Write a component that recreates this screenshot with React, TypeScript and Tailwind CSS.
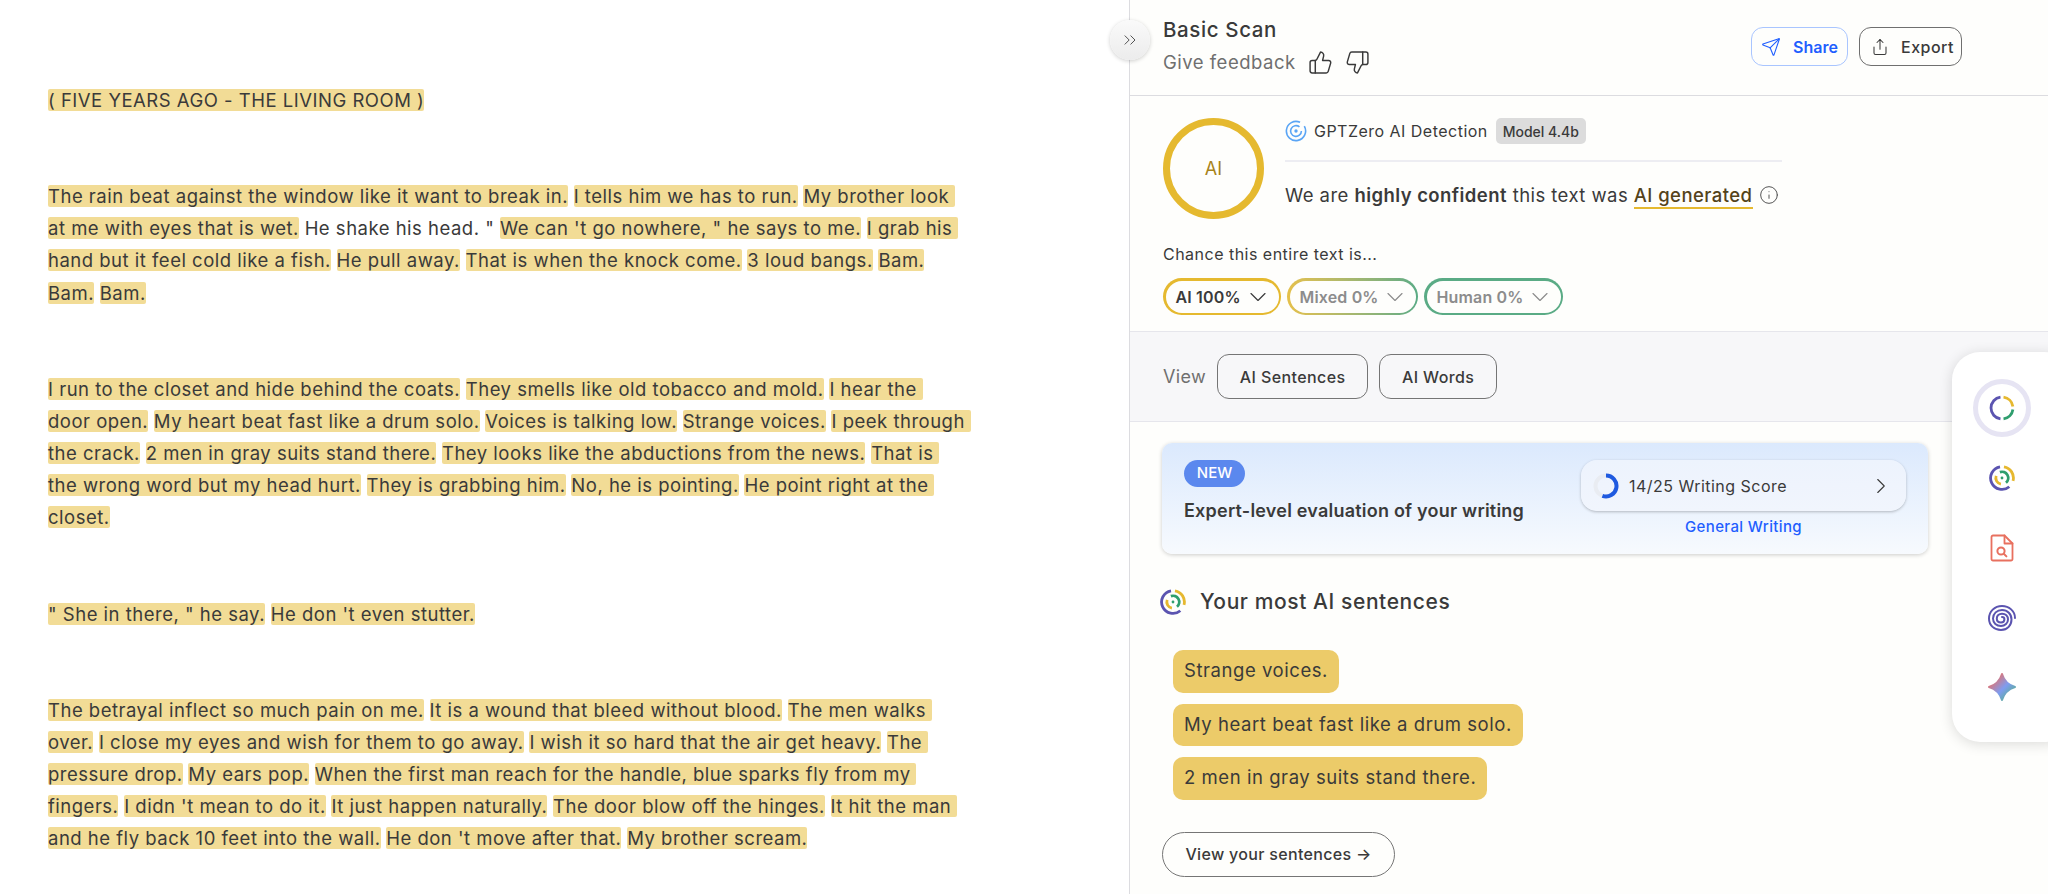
import { ChevronDown, ChevronRight, ChevronsRight, Info, Send, Share, ThumbsDown, ThumbsUp } from 'lucide-react';

type Part = { text: string; ai?: boolean };

const ai = (text: string): Part => ({ text, ai: true });

// line ends are kept as in the scan, the highlight runs over the trailing space
const paragraphs: Part[][] = [
  [ai('( FIVE YEARS AGO - THE LIVING ROOM )')],
  [
    ai('The rain beat against the window like it want to break in.'),
    ai('I tells him we has to run.'),
    ai('My brother look \nat me with eyes that is wet.'),
    { text: 'He shake his head. "' },
    ai("We can 't go nowhere, \" he says to me."),
    ai('I grab his \nhand but it feel cold like a fish.'),
    ai('He pull away.'),
    ai('That is when the knock come.'),
    ai('3 loud bangs.'),
    ai('Bam.\n'),
    ai('Bam.'),
    ai('Bam.'),
  ],
  [
    ai('I run to the closet and hide behind the coats.'),
    ai('They smells like old tobacco and mold.'),
    ai('I hear the \ndoor open.'),
    ai('My heart beat fast like a drum solo.'),
    ai('Voices is talking low.'),
    ai('Strange voices.'),
    ai('I peek through \nthe crack.'),
    ai('2 men in gray suits stand there.'),
    ai('They looks like the abductions from the news.'),
    ai('That is \nthe wrong word but my head hurt.'),
    ai('They is grabbing him.'),
    ai('No, he is pointing.'),
    ai('He point right at the \ncloset.'),
  ],
  [ai('" She in there, " he say.'), ai("He don 't even stutter.")],
  [
    ai('The betrayal inflect so much pain on me.'),
    ai('It is a wound that bleed without blood.'),
    ai('The men walks \nover.'),
    ai('I close my eyes and wish for them to go away.'),
    ai('I wish it so hard that the air get heavy.'),
    ai('The \npressure drop.'),
    ai('My ears pop.'),
    ai('When the first man reach for the handle, blue sparks fly from my \nfingers.'),
    ai("I didn 't mean to do it."),
    ai('It just happen naturally.'),
    ai('The door blow off the hinges.'),
    ai('It hit the man \nand he fly back 10 feet into the wall.'),
    ai("He don 't move after that."),
    ai('My brother scream.'),
  ],
];

// arc between two clock angles (degrees) for the ring logos
function arc(cx: number, cy: number, r: number, from: number, to: number) {
  const pt = (a: number) => {
    const rad = ((a - 90) * Math.PI) / 180;
    return `${(cx + r * Math.cos(rad)).toFixed(2)} ${(cy + r * Math.sin(rad)).toFixed(2)}`;
  };
  return `M${pt(from)} A${r} ${r} 0 ${to - from > 180 ? 1 : 0} 1 ${pt(to)}`;
}

function DetectorLogo({ size }: { size: number }) {
  return (
    <svg width={size} height={size} viewBox="0 0 26 26" fill="none" strokeWidth="2.8">
      <path d={arc(13, 13, 11.4, 140, 350)} stroke="#5b54b0" />
      <path d={arc(13, 13, 11.4, 10, 105)} stroke="#e6b82f" />
      <path d={arc(13, 13, 6.2, 340, 500)} stroke="#2f9e6e" />
      <path d={arc(13, 13, 6.2, 190, 290)} stroke="#e6b82f" />
      <circle cx="13" cy="13" r="1.4" fill="#2f9e6e" />
    </svg>
  );
}

function ChartRing() {
  return (
    <svg width="26" height="26" viewBox="0 0 26 26" fill="none" strokeWidth="2.8">
      <path d={arc(13, 13, 11, 188, 352)} stroke="#5b54b0" />
      <path d={arc(13, 13, 11, 8, 82)} stroke="#e6b82f" />
      <path d={arc(13, 13, 11, 98, 172)} stroke="#2f9e6e" />
    </svg>
  );
}

function FileSearchIcon() {
  return (
    <svg width="24" height="28" viewBox="0 0 24 28" fill="none" stroke="#e8705f" strokeWidth="1.8" strokeLinejoin="round" strokeLinecap="round">
      <path d="M3 1.5h11.5l8 8v15.5a1.5 1.5 0 0 1-1.5 1.5H3a1.5 1.5 0 0 1-1.5-1.5V3A1.5 1.5 0 0 1 3 1.5z" />
      <path d="M14.5 1.5v8h8" />
      <circle cx="11" cy="17" r="3.6" strokeWidth="2" />
      <path d="M13.8 19.8l2.6 2.6" strokeWidth="2" />
    </svg>
  );
}

function SpiralIcon() {
  return (
    <svg width="28" height="26" viewBox="0 0 28 26" fill="none" stroke="#5b54b0" strokeWidth="2" strokeLinecap="round">
      <path d="M27 13C27 6 21 1 14 1C6.5 1 1 6.5 1 13.5C1 20.5 6.5 25 13 25C19.5 25 23.5 20 23.5 14.5C23.5 9 19.5 5 14 5C9 5 5 8.5 5 13.5C5 18 8.5 21 13 21C17 21 20 18 20 14.5C20 11 17.5 8.7 14 8.7C11 8.7 8.8 10.8 8.8 13.5C8.8 16 10.7 17.5 13 17.5C15 17.5 16.4 16 16.4 14.3C16.4 12.8 15.3 12 14 12" />
    </svg>
  );
}

function SparkIcon() {
  return (
    <svg width="30" height="30" viewBox="0 0 30 30">
      <defs>
        <linearGradient id="spark" x1="0" y1="0" x2="1" y2="1">
          <stop offset="0.15" stopColor="#ea6f66" />
          <stop offset="0.55" stopColor="#7f9cf0" />
          <stop offset="0.9" stopColor="#55b08a" />
        </linearGradient>
      </defs>
      <path d="M15 2Q18 12 28 15Q18 18 15 28Q12 18 2 15Q12 12 15 2Z" fill="url(#spark)" stroke="url(#spark)" strokeWidth="2" strokeLinejoin="round" />
    </svg>
  );
}

function GptZeroMark() {
  return (
    <svg width="22" height="22" viewBox="0 0 22 22" fill="none" stroke="#5aa5f5" strokeWidth="1.6">
      <path d={arc(11, 11, 9.6, 60, 385)} />
      <path d={arc(11, 11, 5.4, 90, 400)} />
      <circle cx="11" cy="11" r="1.7" fill="#5aa5f5" stroke="none" />
    </svg>
  );
}

function Pill({ label, className }: { label: string; className: string }) {
  return (
    <div className={`h-[37px] rounded-full p-[2.5px] ${className}`}>
      <div className="flex h-full items-center justify-between rounded-full bg-[#fefefc] pl-[10px] pr-[7px] text-[16px] font-semibold tracking-[0.01em]">
        <span>{label}</span>
        <ChevronDown size={28} strokeWidth={1} />
      </div>
    </div>
  );
}

export default function App() {
  return (
    <div className="flex h-screen overflow-hidden bg-white font-['Inter',sans-serif] text-[#3a3a3a]">
      {/* Scanned document */}
      <div className="w-[1129px] shrink-0 pl-[48px] pr-[100px] pt-[84px] text-[18.5px] leading-[32.1px] tracking-[0.027em]">
        {paragraphs.map((parts, i) => (
          <p key={i} className="mb-[64.2px] whitespace-pre-wrap">
            {parts.map((part, j) => (
              <span key={j}>
                <span className={part.ai ? 'rounded-[2px] bg-[#f2dc96] [box-decoration-break:clone]' : ''}>{part.text}</span>
                {j < parts.length - 1 && !part.text.endsWith('\n') ? ' ' : ''}
              </span>
            ))}
          </p>
        ))}
      </div>

      {/* Results panel */}
      <div className="relative flex-1 border-l border-[#dcdce0] bg-[#fefefc]">
        <button className="absolute left-[-20px] top-[20px] flex h-[40px] w-[40px] items-center justify-center rounded-full bg-gradient-to-b from-[#fafafa] to-[#ececec] text-[#444] shadow-[0_1px_4px_rgba(0,0,0,0.2)]">
          <ChevronsRight size={20} strokeWidth={1.1} />
        </button>

        <div className="flex h-[96px] items-start justify-between border-b border-[#dcdce0] pl-[33px] pr-[86px]">
          <div className="pt-[16px]">
            <div className="text-[20.5px] font-medium leading-[28px] tracking-[0.03em]">Basic Scan</div>
            <div className="mt-[5px] flex items-center text-[18.5px] leading-[26px] tracking-[0.027em] text-[#6f6f6f]">
              Give feedback
              <ThumbsUp size={25} strokeWidth={1.4} className="ml-[12px] text-[#3a3a3a]" />
              <ThumbsDown size={25} strokeWidth={1.4} className="ml-[12px] text-[#3a3a3a]" />
            </div>
          </div>
          <div className="mt-[27px] flex gap-[11px]">
            <button className="flex h-[39px] w-[97px] items-center gap-[12px] rounded-[12px] border border-[#a9c5ff] pl-[9px] text-[16px] font-semibold text-[#1f5eff]">
              <Send size={20} strokeWidth={1.3} />
              Share
            </button>
            <button className="flex h-[39px] w-[103px] items-center gap-[12px] rounded-[12px] border border-[#6f6f6f] pl-[11px] text-[16px] font-medium tracking-[0.03em]">
              <Share size={18} strokeWidth={1.4} />
              Export
            </button>
          </div>
        </div>

        <div className="h-[236px] border-b border-[#e6e6ec] pl-[33px] pt-[22px]">
          <div className="flex gap-[21px]">
            <div className="flex h-[101px] w-[101px] items-center justify-center rounded-full border-[7px] border-[#e5b92f] text-[18px] text-[#a8831a]">
              AI
            </div>
            <div className="w-[497px]">
              <div className="flex h-[26px] items-center">
                <GptZeroMark />
                <span className="ml-[7px] text-[16px] tracking-[0.03em]">GPTZero AI Detection</span>
                <span className="ml-[8px] flex h-[26px] w-[90px] items-center justify-center rounded-[5px] bg-[#dcdcdc] text-[14px] font-medium">
                  Model 4.4b
                </span>
              </div>
              <div className="mt-[16px] border-t-2 border-[#ededf2]" />
              <div className="mt-[19px] flex items-center whitespace-nowrap text-[18.5px] leading-[28px] tracking-[0.024em]">
                <span>
                  We are <span className="font-semibold">highly confident</span> this text was{' '}
                  <span className="border-b-2 border-[#e5b92f] pb-[1px] font-medium text-[#54431a]">AI generated</span>
                </span>
                <Info size={20} strokeWidth={1.2} className="ml-[6px] text-[#555]" />
              </div>
            </div>
          </div>
          <div className="mt-[24px] text-[16px] leading-[22px] tracking-[0.03em]">Chance this entire text is...</div>
          <div className="mt-[13px] flex gap-[6px]">
            <div className="w-[118px]">
              <Pill label="AI 100%" className="bg-[#e5b92f]" />
            </div>
            <div className="w-[131px] text-[#8c8c8c]">
              <Pill label="Mixed 0%" className="bg-gradient-to-r from-[#e5c04a] to-[#5aab85]" />
            </div>
            <div className="w-[139px] text-[#8c8c8c]">
              <Pill label="Human 0%" className="bg-[#5aab85]" />
            </div>
          </div>
        </div>

        <div className="flex h-[90px] items-center gap-[11px] border-b border-[#e6e6ec] bg-[#f7f7f9] pl-[33px]">
          <span className="text-[18px] tracking-[0.02em] text-[#6f6f6f]">View</span>
          <button className="h-[45px] w-[151px] rounded-[12px] border border-[#757575] text-[16px] font-medium tracking-[0.025em]">AI Sentences</button>
          <button className="h-[45px] w-[118px] rounded-[12px] border border-[#757575] text-[16px] font-medium tracking-[0.025em]">AI Words</button>
        </div>

        <div className="pl-[32px] pt-[21px]">
          <div className="flex h-[111px] w-[766px] items-start justify-between rounded-[10px] bg-gradient-to-b from-[#dbe9fd] to-[#f7fafe] pl-[22px] pr-[22px] pt-[17px] shadow-[0_1px_4px_rgba(0,0,0,0.2)]">
            <div>
              <span className="flex h-[27px] w-[61px] items-center justify-center rounded-full bg-[#5b88ee] text-[15px] font-medium text-white">NEW</span>
              <div className="mt-[11px] text-[18px] font-semibold leading-[26px] tracking-[0.012em]">Expert-level evaluation of your writing</div>
            </div>
            <div className="w-[325px]">
              <div className="flex h-[51px] items-center rounded-[16px] bg-gradient-to-b from-[#edf3fd] to-[#f1f5fd] pl-[12px] pr-[12px] shadow-[0_1px_3px_rgba(0,0,0,0.25)]">
                <svg width="26" height="26" viewBox="0 0 26 26" fill="none" strokeWidth="4">
                  <circle cx="13" cy="13" r="10.5" stroke="#e9ecf2" />
                  <path d={arc(13, 13, 10.5, 0, 200)} stroke="#1f5ae0" />
                </svg>
                <span className="ml-[10px] flex-1 text-[16px] tracking-[0.03em]">14/25 Writing Score</span>
                <ChevronRight size={26} strokeWidth={1} />
              </div>
              <div className="mt-[7px] text-center text-[15px] font-medium leading-[18px] tracking-[0.025em] text-[#1f5eff]">General Writing</div>
            </div>
          </div>

          <div className="mt-[34px] flex h-[28px] items-center">
            <span className="-ml-[2px]">
              <DetectorLogo size={26} />
            </span>
            <span className="ml-[14px] text-[21px] font-medium tracking-[0.028em]">Your most AI sentences</span>
          </div>

          <div className="mt-[34px] flex flex-col items-start gap-[11px] pl-[11px] text-[18.5px] tracking-[0.03em]">
            <div className="flex h-[42.5px] items-center rounded-[10px] bg-[#eccb69] px-[11px]">Strange voices.</div>
            <div className="flex h-[42.5px] items-center rounded-[10px] bg-[#eccb69] px-[11px]">My heart beat fast like a drum solo.</div>
            <div className="flex h-[42.5px] items-center rounded-[10px] bg-[#eccb69] px-[11px]">2 men in gray suits stand there.</div>
          </div>

          <button className="mt-[32px] h-[45px] w-[233px] rounded-full border border-[#757575] text-[16px] font-medium tracking-[0.02em]">
            View your sentences →
          </button>
        </div>

        {/* Floating tools rail */}
        <div className="absolute left-[822px] top-[352px] flex h-[390px] w-[120px] flex-col items-center rounded-[28px] bg-white pr-[20px] pt-[27px] shadow-[0_2px_14px_rgba(0,0,0,0.14)]">
          <div className="flex h-[58px] w-[58px] items-center justify-center rounded-full border-[5px] border-[#e6e4f3]">
            <ChartRing />
          </div>
          <div className="mt-[27px] flex h-[28px] items-center">
            <DetectorLogo size={26} />
          </div>
          <div className="mt-[42px] flex h-[28px] items-center">
            <FileSearchIcon />
          </div>
          <div className="mt-[42px] flex h-[28px] items-center">
            <SpiralIcon />
          </div>
          <div className="mt-[41px] flex h-[28px] items-center">
            <SparkIcon />
          </div>
        </div>
      </div>
    </div>
  );
}
